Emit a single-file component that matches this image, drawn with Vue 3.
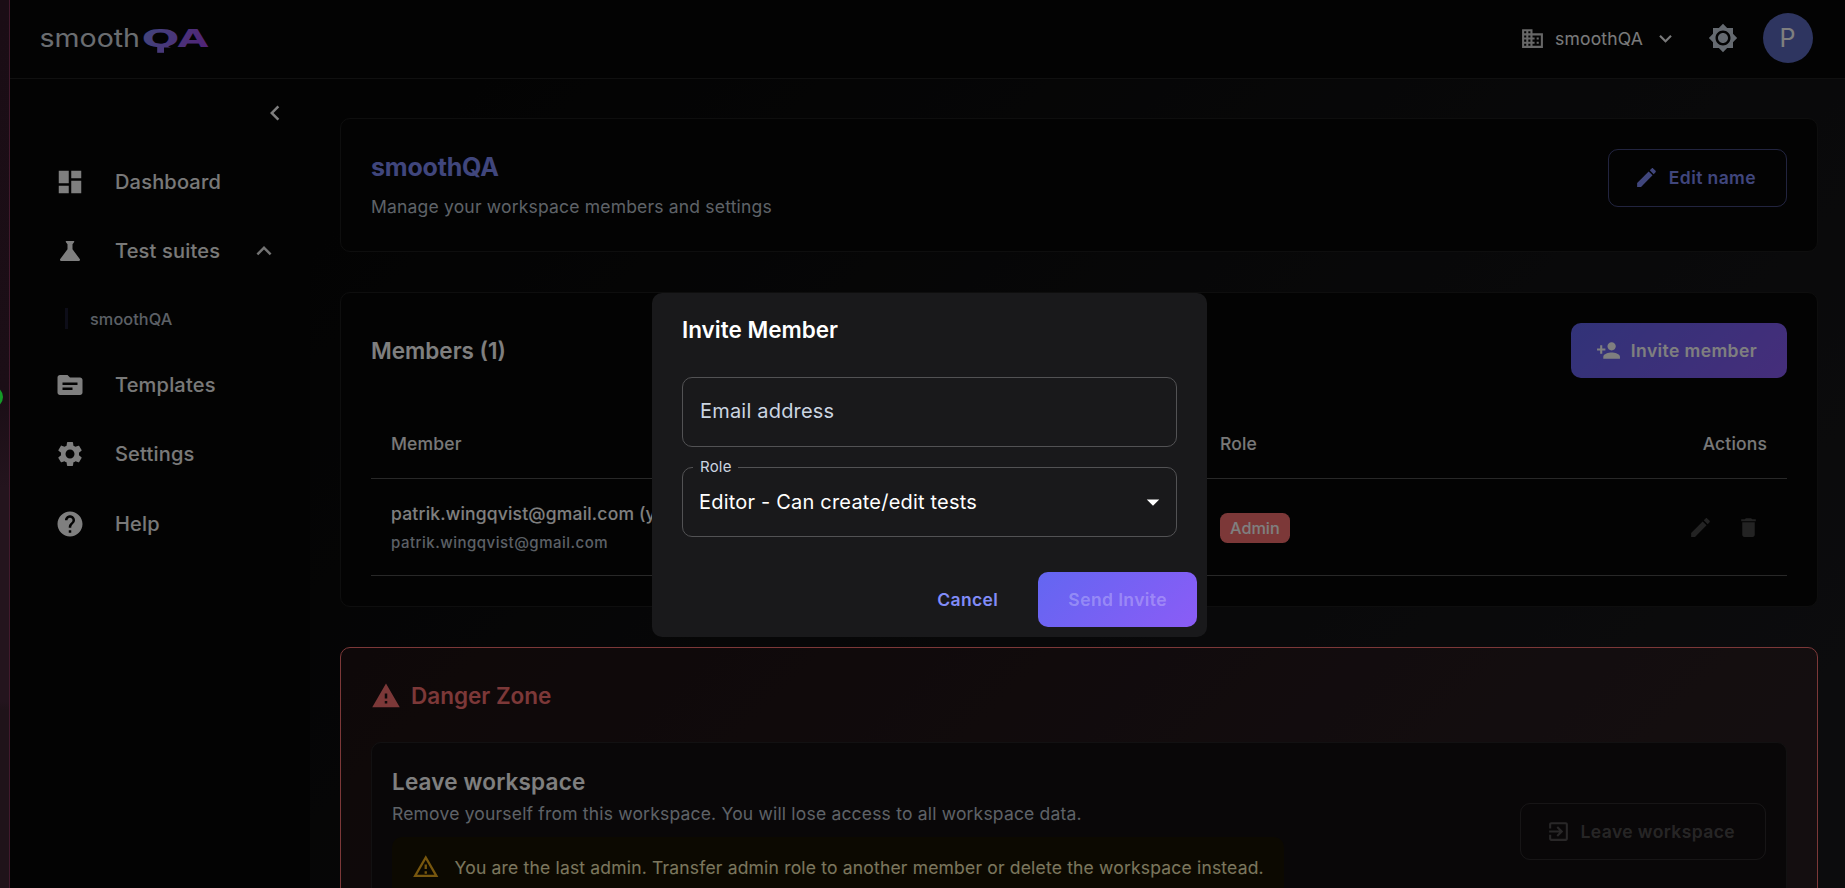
<template>
  <div class="screen">
    <div class="edge-strip">
      <span class="edge-dot"></span>
    </div>

    <div class="app">
      <header class="topbar">
        <svg class="logo" viewBox="0 0 172 40" role="img" aria-label="smoothQA">
          <defs>
            <linearGradient id="logoGradient" gradientUnits="userSpaceOnUse" x1="104" y1="8" x2="168" y2="32">
              <stop offset="0" stop-color="#858cf8" />
              <stop offset="1" stop-color="#a344ee" />
            </linearGradient>
            <clipPath id="logoClip">
              <rect x="95" y="0" width="50" height="28.4" />
            </clipPath>
          </defs>
          <text x="-0.5" y="28" font-size="25" font-weight="400" fill="#d5dae0" textLength="100.5" lengthAdjust="spacingAndGlyphs">smooth</text>
          <g class="logo-bold" fill="url(#logoGradient)" font-size="24.5">
            <text x="101.6" y="28" textLength="38" lengthAdjust="spacingAndGlyphs" clip-path="url(#logoClip)">Q</text>
            <text x="137.6" y="28" textLength="31" lengthAdjust="spacingAndGlyphs">A</text>
            <rect x="117.2" y="27" width="6.8" height="6.8" />
          </g>
        </svg>

        <div class="topbar-right">
          <button class="workspace-switch">
            <svg class="icon-sm" viewBox="0 0 24 24"><path :d="icons.business" /></svg>
            <span>smoothQA</span>
            <svg class="icon-sm" viewBox="0 0 24 24"><path :d="icons.arrowDown" /></svg>
          </button>
          <svg class="icon theme-toggle" viewBox="0 0 24 24"><path :d="icons.brightness" /></svg>
          <div class="avatar">P</div>
        </div>
      </header>

      <div class="body">
        <nav class="sidebar">
          <div class="collapse">
            <svg class="icon" viewBox="0 0 24 24"><path :d="icons.chevronLeft" /></svg>
          </div>
          <template v-for="item in navItems" :key="item.label">
            <a class="nav-item">
              <svg class="icon" viewBox="0 0 24 24"><path :d="icons[item.icon]" /></svg>
              <span class="nav-label">{{ item.label }}</span>
              <svg v-if="item.children" class="icon nav-expand" viewBox="0 0 24 24"><path :d="icons.expandLess" /></svg>
            </a>
            <a v-for="child in item.children" :key="child" class="nav-child">{{ child }}</a>
          </template>
        </nav>

        <main class="content">
          <section class="card workspace-card">
            <div>
              <h1 class="workspace-name">smoothQA</h1>
              <p class="workspace-desc">Manage your workspace members and settings</p>
            </div>
            <button class="btn btn-outlined">
              <svg class="icon-sm" viewBox="0 0 24 24"><path :d="icons.edit" /></svg>
              Edit name
            </button>
          </section>

          <section class="card">
            <div class="card-head">
              <h2 class="card-title">Members ({{ members.length }})</h2>
              <button class="btn btn-primary">
                <svg class="icon-sm" viewBox="0 0 24 24"><path :d="icons.personAdd" /></svg>
                Invite member
              </button>
            </div>
            <div class="table">
              <div class="row row-head">
                <span>Member</span>
                <span>Role</span>
                <span class="right">Actions</span>
              </div>
              <div v-for="member in members" :key="member.email" class="row">
                <div>
                  <div class="member-name">{{ member.email }} (you)</div>
                  <div class="member-email">{{ member.email }}</div>
                </div>
                <div class="member-role"><span class="chip">{{ member.role }}</span></div>
                <div class="row-actions">
                  <svg class="icon-sm" viewBox="0 0 24 24"><path :d="icons.edit" /></svg>
                  <svg class="icon-sm" viewBox="0 0 24 24"><path :d="icons.trash" /></svg>
                </div>
              </div>
            </div>
          </section>

          <section class="card danger-card">
            <h2 class="danger-title">
              <svg class="icon" viewBox="0 0 24 24"><path :d="icons.warning" /></svg>
              Danger Zone
            </h2>
            <div class="danger-box">
              <div>
                <h3 class="danger-heading">Leave workspace</h3>
                <p class="danger-text">Remove yourself from this workspace. You will lose access to all workspace data.</p>
                <div class="alert">
                  <svg class="alert-icon" viewBox="0 0 24 24"><path :d="icons.warningOutline" /></svg>
                  <span class="alert-text">You are the last admin. Transfer admin role to another member or delete the workspace instead.</span>
                </div>
              </div>
              <button class="btn btn-disabled" disabled>
                <svg class="icon-sm" viewBox="0 0 24 24"><path :d="icons.exit" /></svg>
                Leave workspace
              </button>
            </div>
          </section>
        </main>
      </div>

      <div v-if="dialogOpen" class="backdrop">
        <form class="dialog" @submit.prevent>
          <h2 class="dialog-title">Invite Member</h2>
          <div class="dialog-fields">
            <input v-model="email" type="email" class="field" placeholder="Email address" />
            <div class="field select">
              <span class="field-label">Role</span>
              <span class="select-value">{{ role }}</span>
              <svg class="icon" viewBox="0 0 24 24"><path d="M7 10l5 5 5-5z" /></svg>
            </div>
          </div>
          <div class="dialog-actions">
            <button type="button" class="btn btn-text" @click="dialogOpen = false">Cancel</button>
            <button type="submit" class="btn btn-primary btn-send" :disabled="!email">Send Invite</button>
          </div>
        </form>
      </div>
    </div>
  </div>
</template>

<script setup>
import { ref } from 'vue';

const dialogOpen = ref(true);
const email = ref('');
const role = ref('Editor - Can create/edit tests');

const members = ref([
  { email: 'patrik.wingqvist@gmail.com', role: 'Admin' }
]);

const navItems = [
  { label: 'Dashboard', icon: 'dashboard' },
  { label: 'Test suites', icon: 'science', children: ['smoothQA'] },
  { label: 'Templates', icon: 'topic' },
  { label: 'Settings', icon: 'settings' },
  { label: 'Help', icon: 'help' }
];

const icons = {
  business: 'M12 7V3H2v18h20V7H12zM6 19H4v-2h2v2zm0-4H4v-2h2v2zm0-4H4V9h2v2zm0-4H4V5h2v2zm4 12H8v-2h2v2zm0-4H8v-2h2v2zm0-4H8V9h2v2zm0-4H8V5h2v2zm10 12h-8v-2h2v-2h-2v-2h2v-2h-2V9h8v10zm-2-8h-2v2h2v-2zm0 4h-2v2h2v-2z',
  arrowDown: 'M7.41 8.59 12 13.17l4.59-4.58L18 10l-6 6-6-6 1.41-1.41z',
  brightness: 'M20 8.69V4h-4.69L12 .69 8.69 4H4v4.69L.69 12 4 15.31V20h4.69L12 23.31 15.31 20H20v-4.69L23.31 12 20 8.69zM12 18c-3.31 0-6-2.69-6-6s2.69-6 6-6 6 2.69 6 6-2.69 6-6 6zm0-10c-2.21 0-4 1.79-4 4s1.79 4 4 4 4-1.79 4-4-1.79-4-4-4z',
  chevronLeft: 'M15.41 7.41 14 6l-6 6 6 6 1.41-1.41L10.83 12z',
  expandLess: 'm12 8-6 6 1.41 1.41L12 10.83l4.59 4.58L18 14z',
  dashboard: 'M3 13h8V3H3v10zm0 8h8v-6H3v6zm10 0h8V11h-8v10zm0-18v6h8V3h-8z',
  science: 'M19.8 18.4 14 10.67V6.5l1.35-1.69c.26-.33.03-.81-.39-.81H9.04c-.42 0-.65.48-.39.81L10 6.5v4.17L4.2 18.4c-.49.66-.02 1.6.8 1.6h14c.82 0 1.29-.94.8-1.6z',
  topic: 'M20 6h-8l-2-2H4c-1.1 0-1.99.9-1.99 2L2 18c0 1.1.9 2 2 2h16c1.1 0 2-.9 2-2V8c0-1.1-.9-2-2-2zm-6 10H6v-2h8v2zm4-4H6v-2h12v2z',
  settings: 'M19.14 12.94c.04-.3.06-.61.06-.94 0-.32-.02-.64-.07-.94l2.03-1.58c.18-.14.23-.41.12-.61l-1.92-3.32c-.12-.22-.37-.29-.59-.22l-2.39.96c-.5-.38-1.03-.7-1.62-.94l-.36-2.54c-.04-.24-.24-.41-.48-.41h-3.84c-.24 0-.43.17-.47.41l-.36 2.54c-.59.24-1.13.57-1.62.94l-2.39-.96c-.22-.08-.47 0-.59.22L2.74 8.87c-.12.21-.08.47.12.61l2.03 1.58c-.05.3-.09.63-.09.94s.02.64.07.94l-2.03 1.58c-.18.14-.23.41-.12.61l1.92 3.32c.12.22.37.29.59.22l2.39-.96c.5.38 1.03.7 1.62.94l.36 2.54c.05.24.24.41.48.41h3.84c.24 0 .44-.17.47-.41l.36-2.54c.59-.24 1.13-.56 1.62-.94l2.39.96c.22.08.47 0 .59-.22l1.92-3.32c.12-.22.07-.47-.12-.61l-2.01-1.58zM12 15.6c-1.98 0-3.6-1.62-3.6-3.6s1.62-3.6 3.6-3.6 3.6 1.62 3.6 3.6-1.62 3.6-3.6 3.6z',
  help: 'M12 2C6.48 2 2 6.48 2 12s4.48 10 10 10 10-4.48 10-10S17.52 2 12 2zm1 17h-2v-2h2v2zm2.07-7.75-.9.92C13.45 12.9 13 13.5 13 15h-2v-.5c0-1.1.45-2.1 1.17-2.83l1.24-1.26c.37-.36.59-.86.59-1.41 0-1.1-.9-2-2-2s-2 .9-2 2H8c0-2.21 1.79-4 4-4s4 1.79 4 4c0 .88-.36 1.68-.93 2.25z',
  edit: 'M3 17.25V21h3.75L17.81 9.94l-3.75-3.75L3 17.25zM20.71 7.04c.39-.39.39-1.02 0-1.41l-2.34-2.34c-.39-.39-1.02-.39-1.41 0l-1.83 1.83 3.75 3.75 1.83-1.83z',
  personAdd: 'M15 12c2.21 0 4-1.79 4-4s-1.79-4-4-4-4 1.79-4 4 1.79 4 4 4zm-9-2V7H4v3H1v2h3v3h2v-3h3v-2H6zm9 4c-2.67 0-8 1.34-8 4v2h16v-2c0-2.66-5.33-4-8-4z',
  trash: 'M6 19c0 1.1.9 2 2 2h8c1.1 0 2-.9 2-2V7H6v12zM19 4h-3.5l-1-1h-5l-1 1H5v2h14V4z',
  warning: 'M1 21h22L12 2 1 21zm12-3h-2v-2h2v2zm0-4h-2v-4h2v4z',
  warningOutline: 'M12 5.99 19.53 19H4.47L12 5.99M12 2 1 21h22L12 2zm1 14h-2v2h2v-2zm0-6h-2v4h2v-4z',
  exit: 'M10.09 15.59 11.5 17l5-5-5-5-1.41 1.41L12.67 11H3v2h9.67l-2.58 2.59zM19 3H5c-1.11 0-2 .9-2 2v4h2V5h14v14H5v-4H3v4c0 1.1.89 2 2 2h14c1.1 0 2-.9 2-2V5c0-1.1-.9-2-2-2z'
};
</script>

<style>
body {
  margin: 0;
  background: #030303;
}
</style>

<style scoped>
.screen {
  display: flex;
  width: 100vw;
  height: 100vh;
  overflow: hidden;
  font-family: Inter, "Liberation Sans", sans-serif;
  color: #fff;
}

h1,
h2,
h3,
p {
  margin: 0;
}

button {
  font-family: inherit;
  margin: 0;
}

svg {
  display: block;
  flex: none;
  fill: currentColor;
}

.edge-strip {
  position: relative;
  flex: none;
  box-sizing: border-box;
  width: 10px;
  overflow: hidden;
  border-right: 1px solid #421a2d;
  background: linear-gradient(#1a0d15, #1b0e16 45%, #23141d 55%, #23141d 79%, #1f1319 80%);
}

.edge-dot {
  position: absolute;
  left: -19px;
  top: 386px;
  width: 22px;
  height: 22px;
  border-radius: 50%;
  background: #149a27;
}

.app {
  position: relative;
  flex: none;
  width: 1839px;
  height: 930px;
  background: linear-gradient(135deg, #070707 20%, #18181b 90%);
}

.icon {
  width: 30px;
  height: 30px;
}

.icon-sm {
  width: 25px;
  height: 25px;
}

/* top bar */
.topbar {
  box-sizing: border-box;
  display: flex;
  align-items: center;
  justify-content: space-between;
  height: 79px;
  padding: 0 36px 0 30px;
  background: #060606;
  border-bottom: 1px solid #202020;
}

.logo {
  width: 172px;
  height: 40px;
  overflow: visible;
}

.logo-bold {
  font-family: "DejaVu Sans", sans-serif;
  font-weight: 700;
}

.topbar-right {
  display: flex;
  align-items: center;
  height: 76px;
  margin-bottom: 2px;
}

.workspace-switch {
  display: flex;
  align-items: center;
  gap: 10px;
  padding: 0;
  border: 0;
  background: none;
  color: #f4f5f6;
  font-size: 17.5px;
  letter-spacing: 0.18px;
}

.workspace-switch svg:first-child {
  color: #cfcfcf;
}

.theme-toggle {
  margin: 0 25px 0 30px;
  color: #cbd5e1;
}

.avatar {
  width: 50px;
  height: 50px;
  border-radius: 50%;
  background: #5c6bc0;
  font-size: 25px;
  line-height: 51px;
  text-align: center;
  text-indent: -1px;
}

/* layout */
.body {
  display: flex;
  height: 851px;
}

.sidebar {
  flex: none;
  width: 300px;
  background: #060606;
}

.content {
  flex: 1;
  display: flex;
  flex-direction: column;
  gap: 40px;
  padding: 39px 31px 0 30px;
  overflow: hidden;
}

.collapse {
  display: flex;
  align-items: center;
  justify-content: flex-end;
  height: 68px;
  padding-right: 20px;
}

.nav-item {
  display: flex;
  align-items: center;
  height: 69.4px;
  padding: 0 31px 0 45px;
}

.nav-label {
  flex: 1;
  margin-left: 30px;
  font-size: 20px;
  font-weight: 500;
  letter-spacing: 0.19px;
  color: #f2f2f2;
}

.nav-expand {
  color: #e6e6e6;
}

.nav-child {
  display: flex;
  align-items: center;
  height: 21px;
  margin: 22.6px 0 21px 55px;
  padding-left: 22px;
  border-left: 3px solid #1a1a30;
  font-size: 16.25px;
  font-weight: 500;
  letter-spacing: 0.1px;
  color: #b8c0cc;
}

/* buttons */
.btn {
  display: inline-flex;
  align-items: center;
  gap: 10px;
  box-sizing: border-box;
  height: 55px;
  padding: 0 30px 0 25px;
  border: 0;
  border-radius: 10px;
  font-size: 17.5px;
  font-weight: 600;
  letter-spacing: 0.4px;
  white-space: nowrap;
}

.btn-primary {
  background: linear-gradient(135deg, #6366f1, #8b5cf6);
  color: #fff;
}

.btn-outlined {
  height: 58px;
  padding-bottom: 1px;
  border: 1px solid rgba(129, 140, 248, 0.5);
  background: none;
  color: #818cf8;
}

.btn-disabled {
  height: 57px;
  border: 1px solid rgba(255, 255, 255, 0.12);
  background: none;
  color: rgba(255, 255, 255, 0.27);
}

.btn-text {
  padding: 0 10px;
  background: none;
  color: #818cf8;
}

.btn-send {
  padding: 0 30px;
}

.btn-send:disabled {
  color: rgba(255, 255, 255, 0.27);
}

/* cards */
.card {
  flex: none;
  box-sizing: border-box;
  padding: 30px;
  border: 1px solid #1c1c1c;
  border-radius: 10px;
  background: #060606;
}

.workspace-card {
  display: flex;
  align-items: flex-start;
  justify-content: space-between;
  height: 134px;
}

.workspace-name {
  font-size: 25px;
  font-weight: 700;
  line-height: 37px;
  letter-spacing: -0.2px;
  color: #818cf8;
}

.workspace-desc {
  margin-top: 8px;
  font-size: 17.5px;
  line-height: 26px;
  letter-spacing: 0.19px;
  color: #bcc4cf;
}

.card-head {
  display: flex;
  align-items: center;
  justify-content: space-between;
  margin-bottom: 30px;
}

.card-title {
  font-size: 22.5px;
  font-weight: 600;
}

.row {
  display: grid;
  grid-template-columns: 829px 1fr 1fr;
  align-items: center;
  box-sizing: border-box;
  height: 97px;
  padding: 0 20px;
  border-bottom: 1px solid #515151;
}

.row-head {
  height: 71px;
  font-size: 17.5px;
  font-weight: 500;
  letter-spacing: 0.15px;
  color: #f0f0f0;
}

.right {
  text-align: right;
}

.member-name {
  font-size: 17.5px;
  font-weight: 500;
  line-height: 30px;
  letter-spacing: 0.19px;
}

.member-email {
  font-size: 15px;
  font-weight: 500;
  line-height: 27px;
  letter-spacing: 0.5px;
  color: #b8c0cc;
}

.member-role {
  display: flex;
  padding-top: 1px;
}

.chip {
  height: 30px;
  padding: 0 10px;
  border-radius: 7.5px;
  background: #f87171;
  font-size: 16.25px;
  font-weight: 500;
  line-height: 30px;
}

.row-actions {
  display: flex;
  justify-content: flex-end;
  gap: 23px;
  padding-right: 6px;
  color: #464646;
}

/* danger zone */
.danger-card {
  height: 400px;
  border-color: #f87171;
  background: rgba(248, 90, 100, 0.08);
}

.danger-title {
  display: flex;
  align-items: center;
  gap: 10px;
  height: 35px;
  font-size: 22.5px;
  font-weight: 600;
  color: #f87171;
}

.danger-box {
  display: flex;
  align-items: center;
  justify-content: space-between;
  margin-top: 29px;
  padding: 20px;
  border: 1px solid #252324;
  border-radius: 10px;
  background: #120e10;
}

.danger-heading {
  font-size: 22.5px;
  font-weight: 600;
  line-height: 37px;
  letter-spacing: 0.17px;
}

.danger-text {
  font-size: 17.5px;
  line-height: 28px;
  letter-spacing: 0.19px;
  color: #bcc4cf;
}

.alert {
  display: inline-flex;
  margin-top: 9px;
  padding: 0 20px;
  border-radius: 10px;
  background: #191303;
  color: #f6ecbd;
}

.alert-icon {
  width: 27.5px;
  height: 27.5px;
  margin: 16px 15px 0 0;
  color: #f0ae1c;
}

.alert-text {
  padding: 18px 0;
  font-size: 17.5px;
  line-height: 26px;
  letter-spacing: 0.185px;
  white-space: nowrap;
}

/* dialog */
.backdrop {
  position: absolute;
  inset: 0;
  display: flex;
  align-items: center;
  justify-content: center;
  background: rgba(0, 0, 0, 0.5);
}

.dialog {
  box-sizing: border-box;
  width: 555px;
  height: 344px;
  border-radius: 10px;
  background: #19191b;
}

.dialog-title {
  padding: 19px 30px 0;
  font-size: 22.5px;
  font-weight: 600;
  line-height: 35px;
}

.dialog-fields {
  display: flex;
  flex-direction: column;
  gap: 20px;
  padding: 30px 30px 35px;
}

.field {
  position: relative;
  box-sizing: border-box;
  width: 100%;
  height: 70px;
  padding: 0 17px 2px;
  border: 1px solid #525254;
  border-radius: 10px;
  background: none;
  color: #fff;
  font-family: inherit;
  font-size: 20px;
  letter-spacing: 0.2px;
  outline: none;
}

.field::placeholder {
  color: #cbd5e1;
  opacity: 1;
}

.select {
  display: flex;
  align-items: center;
  justify-content: space-between;
  padding: 0 8px 0 16px;
}

.field-label {
  position: absolute;
  left: 10px;
  top: -10px;
  padding: 0 6px 0 7px;
  background: #19191b;
  color: #cbd5e1;
  font-size: 15px;
  line-height: 18px;
}

.dialog-actions {
  display: flex;
  justify-content: flex-end;
  gap: 30px;
  padding: 0 10px;
}
</style>
